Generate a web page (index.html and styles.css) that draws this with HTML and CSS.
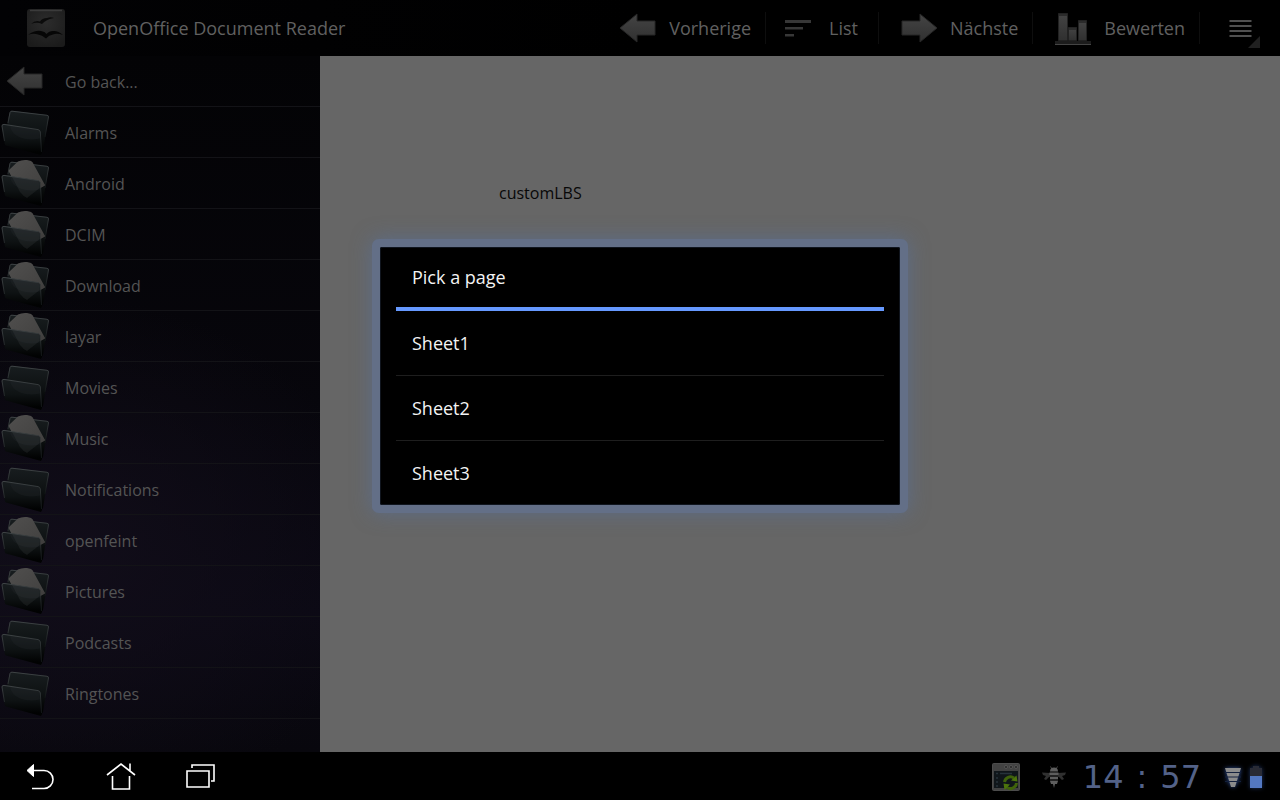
FILE: index.html
```html
<!DOCTYPE html>
<html lang="de">
<head>
<meta charset="utf-8">
<title>OpenOffice Document Reader</title>
<link rel="stylesheet" href="styles.css">
</head>
<body>
<svg class="defs" aria-hidden="true">
  <defs>
    <linearGradient id="metal" x1="0" y1="0" x2="0" y2="1">
      <stop offset="0" stop-color="#444"/><stop offset="1" stop-color="#303030"/>
    </linearGradient>
    <linearGradient id="pane" x1="0" y1="0" x2="0" y2="1">
      <stop offset="0" stop-color="#181d1f"/><stop offset="0.5" stop-color="#0e1213"/><stop offset="0.9" stop-color="#010202"/>
    </linearGradient>
    <linearGradient id="paper" x1="0" y1="0" x2="1" y2="1">
      <stop offset="0" stop-color="#504f4e"/><stop offset="1" stop-color="#403f3e"/>
    </linearGradient>
    <linearGradient id="rim" x1="0" y1="0" x2="0" y2="1">
      <stop offset="0" stop-color="#3e4345"/><stop offset="1" stop-color="#101415"/>
    </linearGradient>
    <radialGradient id="tile" cx="0.5" cy="0.35" r="0.7">
      <stop offset="0" stop-color="#2c2c2c"/><stop offset="1" stop-color="#1b1b1b"/>
    </radialGradient>
    <symbol id="arrow" viewBox="0 0 48 48">
      <path d="M6 24 23 10V17H41V31H23V38Z" fill="url(#metal)" stroke="#262626" stroke-width="1"/>
    </symbol>
    <symbol id="folder-back" viewBox="0 0 50 50">
      <path d="M8 12 10 5Q11 3.500 13 4L47 8Q49 8.500 48.500 10L43 44 41 47 6 30Z" fill="url(#pane)"/>
      <path d="M8 16 10 5.500Q10.500 4 12 4.200L47 8.300Q48.700 8.500 48.500 10L45 30" fill="none" stroke="url(#rim)" stroke-width="1"/>
    </symbol>
    <symbol id="folder-front" viewBox="0 0 50 50">
      <path d="M2 18.500Q2 17 4 17.300L38 22.500Q40 23 40.500 25L42 46 41 48 6 38.500Q5 38 4.800 37Z" fill="url(#pane)"/>
      <path d="M10 18.500Q11 27 20 30.500 29 34 40 31.500L39.500 24 38 22.700Z" fill="#262d30" opacity="0.25"/>
      <path d="M4.500 34 2 19Q2 17.300 4 17.400L38 22.600Q40 23 40.300 25L41.500 45" fill="none" stroke="url(#rim)" stroke-width="1"/>
    </symbol>
    <symbol id="folder" viewBox="0 0 50 50">
      <use href="#folder-back"/><use href="#folder-front"/>
    </symbol>
    <symbol id="folder-full" viewBox="0 0 50 50">
      <use href="#folder-back"/>
      <path d="M9 14Q8 12 10 11L18 3.500Q22 1.500 27 2L31 3Q33 4 34 7L45 27 38 31 20 34Z" fill="url(#paper)"/>
      <use href="#folder-front"/>
      <path d="M12 19 38 23 39.800 25.500V30L27 40Q23 38 20 34Z" fill="#555857" opacity="0.18"/>
      <path d="M40.500 25 44.500 26.500 45 27.500 40.500 30Z" fill="#403f3e"/>
    </symbol>
  </defs>
</svg>

<div class="app">
  <header class="bar">
    <svg class="logo" viewBox="0 0 38 38" aria-hidden="true">
      <rect width="38" height="38" rx="3" fill="url(#tile)"/>
      <path d="M3 1.500H35" stroke="#3b3b3b" stroke-width="1.500"/>
      <path d="M4 15Q8 11 13 12.500Q15 9 20 9Q24 7.500 27 9Q22 9.500 19.500 11.500Q17 12.500 15 15Q10 12.500 4 15Z" fill="#0b0b0b"/>
      <path d="M1 26Q8 21 14 22Q18 22.500 19.500 25Q22 22 26 22Q31 21.500 36 26Q30 24 26 25.500Q22 26 19 29.500Q15 26 11 25.500Q6 24 1 26Z" fill="#060606"/>
    </svg>
    <h1 class="title">OpenOffice Document Reader</h1>
    <nav class="actions">
      <button class="action" type="button"><svg class="action-icon" aria-hidden="true"><use href="#arrow"/></svg>Vorherige</button>
      <button class="action action-compact" type="button">
        <svg class="action-icon" viewBox="0 0 48 48" fill="#373737" aria-hidden="true"><path d="M11 16H37V19H11ZM11 23H29V25.500H11ZM11 30H20V32.500H11Z"/></svg>List</button>
      <button class="action" type="button"><svg class="action-icon flip" aria-hidden="true"><use href="#arrow"/></svg>Nächste</button>
      <button class="action" type="button">
        <svg class="action-icon" viewBox="0 0 48 48" aria-hidden="true">
          <path d="M6 37H42V41H6Z" fill="#1c1c1c"/>
          <g fill="url(#metal)" stroke="#222" stroke-width="1"><path d="M9.500 9.500H18.500V36.500H9.500Z"/><path d="M19.500 23.500H27.500V36.500H19.500Z"/><path d="M29.500 16.500H37.500V36.500H29.500Z"/></g>
          <path d="M10 10H18V12H10ZM20 24H27V26H20ZM30 17H37V19H30Z" fill="#2b2b2b"/>
          <path d="M6 40.500H42" stroke="#444" stroke-width="1"/>
        </svg>Bewerten</button>
      <button class="overflow" type="button" aria-label="Menü">
        <svg class="overflow-icon" viewBox="0 0 80 56" aria-hidden="true">
          <path d="M29.500 21H51.500M29.500 26H51.500M29.500 31H51.500M29.500 36H51.500" stroke="#505050" stroke-width="2"/>
          <path d="M60 36V48H48Z" fill="#202020"/>
        </svg>
      </button>
    </nav>
  </header>

  <main class="content">
    <ul class="files">
      <li><button class="file" type="button"><svg class="file-icon" viewBox="0 0 50 50" aria-hidden="true"><use href="#arrow" x="1" y="1" width="48" height="48"/></svg><span class="file-name">Go back...</span></button></li>
      <li><button class="file" type="button"><svg class="file-icon" aria-hidden="true"><use href="#folder"/></svg><span class="file-name">Alarms</span></button></li>
      <li><button class="file" type="button"><svg class="file-icon" aria-hidden="true"><use href="#folder-full"/></svg><span class="file-name">Android</span></button></li>
      <li><button class="file" type="button"><svg class="file-icon" aria-hidden="true"><use href="#folder-full"/></svg><span class="file-name">DCIM</span></button></li>
      <li><button class="file" type="button"><svg class="file-icon" aria-hidden="true"><use href="#folder-full"/></svg><span class="file-name">Download</span></button></li>
      <li><button class="file" type="button"><svg class="file-icon" aria-hidden="true"><use href="#folder-full"/></svg><span class="file-name">layar</span></button></li>
      <li><button class="file" type="button"><svg class="file-icon" aria-hidden="true"><use href="#folder"/></svg><span class="file-name">Movies</span></button></li>
      <li><button class="file" type="button"><svg class="file-icon" aria-hidden="true"><use href="#folder-full"/></svg><span class="file-name">Music</span></button></li>
      <li><button class="file" type="button"><svg class="file-icon" aria-hidden="true"><use href="#folder"/></svg><span class="file-name">Notifications</span></button></li>
      <li><button class="file" type="button"><svg class="file-icon" aria-hidden="true"><use href="#folder-full"/></svg><span class="file-name">openfeint</span></button></li>
      <li><button class="file" type="button"><svg class="file-icon" aria-hidden="true"><use href="#folder-full"/></svg><span class="file-name">Pictures</span></button></li>
      <li><button class="file" type="button"><svg class="file-icon" aria-hidden="true"><use href="#folder"/></svg><span class="file-name">Podcasts</span></button></li>
      <li><button class="file" type="button"><svg class="file-icon" aria-hidden="true"><use href="#folder"/></svg><span class="file-name">Ringtones</span></button></li>
    </ul>
    <article class="page"><p class="cell">customLBS</p></article>
  </main>

  <div class="modal">
    <section class="dialog" role="dialog" aria-labelledby="dialog-title">
      <h2 class="dialog-title" id="dialog-title">Pick a page</h2>
      <ul class="sheets">
        <li><button class="sheet" type="button">Sheet1</button></li>
        <li><button class="sheet" type="button">Sheet2</button></li>
        <li><button class="sheet" type="button">Sheet3</button></li>
      </ul>
    </section>
  </div>
</div>

<footer class="system">
  <nav class="keys">
    <button class="key" type="button" aria-label="Zurück"><svg class="key-icon" viewBox="0 0 32 32" aria-hidden="true"><path class="solid" d="M3 10.500 9.500 4.500V16.500Z"/><path d="M9 10.500H20a9 9 0 0 1 0 18H8"/></svg></button>
    <button class="key" type="button" aria-label="Startseite"><svg class="key-icon" viewBox="0 0 32 32" aria-hidden="true"><path d="M3 15 17 4 31 15M26 3.500V11M8.500 16V29H25.500V16"/></svg></button>
    <button class="key" type="button" aria-label="Letzte Apps"><svg class="key-icon" viewBox="0 0 32 32" aria-hidden="true"><path d="M3 11H25V27H3ZM8 8V5H30V21H27"/></svg></button>
  </nav>
  <div class="status">
    <svg class="sync" viewBox="0 0 28 28" aria-hidden="true">
      <rect x="0.500" y="0.500" width="27" height="27" rx="1" fill="#424242" stroke="#4c4c4c"/>
      <g fill="#2c2c2c" stroke="#5c5c5c" stroke-width="0.700"><circle cx="14" cy="4" r="1.600"/><circle cx="19" cy="4" r="1.600"/><circle cx="24" cy="4" r="1.600"/></g>
      <rect x="2" y="8" width="24" height="17" fill="#10161a"/>
      <path d="M4 10.500H6M8 10.500H20M4 15H6M4 19H6M4 23H6" stroke="#27333b" stroke-width="1.500"/>
      <g fill="none" stroke="#3f620b" stroke-width="3"><path d="M12.500 19a6 6 0 0 1 9.500-4"/><path d="M24.500 20a6 6 0 0 1-10 4"/></g>
      <path d="M19 17.500 25.500 18.500 24.500 12.500ZM18 21.500 11.500 20.500 12.500 27Z" fill="#4c740c"/>
    </svg>
    <svg class="bee" viewBox="0 0 24 22" aria-hidden="true">
      <path d="M0 6.500 8 7 10 10 7 11 4 14 2 13 4 10 1 9ZM24 6.500 16 7 14 10 17 11 20 14 22 13 20 10 23 9Z" fill="#303030"/>
      <path d="M8.500 0.500 10 3M15.500 0.500 14 3" stroke="#5c5c5c" stroke-width="0.800"/>
      <path d="M8 5.500Q8 1.500 12 1.500T16 5.500ZM7.500 6.500H16.500V9H7.500ZM8 11H16V13H8ZM8 15H16L15 18H13L12 22 11 18H9Z" fill="#5e5e5e"/>
      <path d="M8 9H16V11H8ZM8 13H16V15H8Z" fill="#222"/>
    </svg>
    <time class="clock" datetime="14:57"><span>14</span><span>:</span><span>57</span></time>
    <svg class="signal" viewBox="0 0 16 21" aria-hidden="true">
      <path d="M0 1H16L10 20H6Z" fill="#8c8c8c"/>
      <path d="M0 5.500H16M0 10H16M0 14.500H16" stroke="#14213e" stroke-width="1"/>
    </svg>
    <svg class="battery" viewBox="0 0 12 22" aria-hidden="true">
      <path d="M3 0H9V2H12V10H0V2H3Z" fill="#292b35"/>
      <path d="M0 10H12V22H0Z" fill="#5378c2"/>
    </svg>
  </div>
</footer>
</body>
</html>
```
FILE: styles.css
```css
* {
  box-sizing: border-box;
}

body {
  margin: 0;
  min-height: 100vh;
  display: flex;
  flex-direction: column;
  background: #000;
  color: #606060;
  font-family: "Open Sans", "Noto Sans", sans-serif;
  font-size: 16px;
}

h1,
h2,
p,
ul {
  margin: 0;
  padding: 0;
  font-weight: 400;
  list-style: none;
}

button {
  margin: 0;
  padding: 0;
  border: 0;
  background: none;
  color: inherit;
  font: inherit;
  text-align: left;
  cursor: pointer;
}

svg {
  display: block;
  flex: none;
}

.defs {
  position: absolute;
  width: 0;
  height: 0;
}

.app {
  position: relative;
  flex: 1;
  display: flex;
  flex-direction: column;
}

/* Action bar */
.bar {
  display: flex;
  align-items: center;
  height: 56px;
  padding-left: 27px;
  background: linear-gradient(90deg, #020204, #000 50%);
  font-size: 18px;
}

.logo {
  width: 38px;
  height: 38px;
}

.title {
  margin-left: 28px;
  font-size: 18px;
  white-space: nowrap;
}

.actions {
  display: flex;
  align-items: center;
  margin-left: auto;
}

.action {
  display: flex;
  align-items: center;
  gap: 7px;
  height: 32px;
  padding: 0 14px 0 16px;
  border-right: 1px solid #0e0e0e;
  white-space: nowrap;
}

.action-compact {
  padding: 0 20px 0 8px;
}

.action-icon {
  width: 48px;
  height: 48px;
}

.flip {
  transform: scaleX(-1);
}

.overflow-icon {
  width: 80px;
  height: 56px;
}

/* File list and document */
.content {
  flex: 1;
  display: flex;
}

.files {
  width: 25%;
  background:
    radial-gradient(ellipse 320px 260px at 20% 72%, #110d19, transparent),
    linear-gradient(#030305, #07060c 50%, #0b0914 80%, #08070d);
}

.file {
  display: flex;
  align-items: center;
  gap: 15px;
  width: 100%;
  height: 51px;
  border-bottom: 1px solid #131317;
  color: #545454;
}

.file-icon {
  width: 50px;
  height: 50px;
}

.file-name {
  padding-top: 2px;
}

.page {
  flex: 1;
  background: #666;
}

.cell {
  padding: 126px 0 0 179px;
  line-height: 22px;
  color: #080808;
}

/* Page picker */
.modal {
  position: absolute;
  inset: 0;
  display: flex;
  align-items: center;
  justify-content: center;
}

.dialog {
  width: 520px;
  padding: 0 16px;
  border-radius: 2px;
  background: #000;
  color: #f3f3f3;
  font-size: 18px;
  box-shadow:
    inset 0 0 0 1px #10151e,
    0 0 0 8px #636f87,
    0 0 20px 8px rgba(84, 116, 170, 0.5);
}

.dialog-title {
  padding: 0 16px;
  border-bottom: 4px solid #6699ff;
  font-size: 18px;
  line-height: 60px;
}

.sheet {
  width: 100%;
  padding: 0 16px;
  line-height: 64px;
}

.sheets li + li {
  border-top: 1px solid #1e1e1e;
}

/* System bar */
.system {
  display: flex;
  align-items: center;
  justify-content: space-between;
  height: 48px;
  background: #000;
}

.keys {
  display: flex;
}

.key {
  display: flex;
  justify-content: center;
  width: 80px;
}

.key-icon {
  width: 32px;
  height: 32px;
  fill: none;
  stroke: #fff;
  stroke-width: 1.6;
}

.solid {
  fill: #fff;
  stroke-width: 1;
}

.status {
  display: flex;
  align-items: center;
  padding: 2px 18px 0 0;
}

.sync {
  width: 28px;
  height: 28px;
  margin-right: 22px;
}

.bee {
  width: 24px;
  height: 22px;
}

.clock {
  display: flex;
  gap: 13px;
  margin: 0 24px 0 17px;
  color: #536288;
  font-family: "DejaVu Sans", sans-serif;
  font-size: 32px;
  line-height: 32px;
}

.signal {
  width: 16px;
  height: 21px;
  margin-right: 9px;
  filter: drop-shadow(0 0 2px #2c4a8c);
}

.battery {
  width: 12px;
  height: 22px;
  filter: drop-shadow(0 0 2px #1c305c);
}
```
